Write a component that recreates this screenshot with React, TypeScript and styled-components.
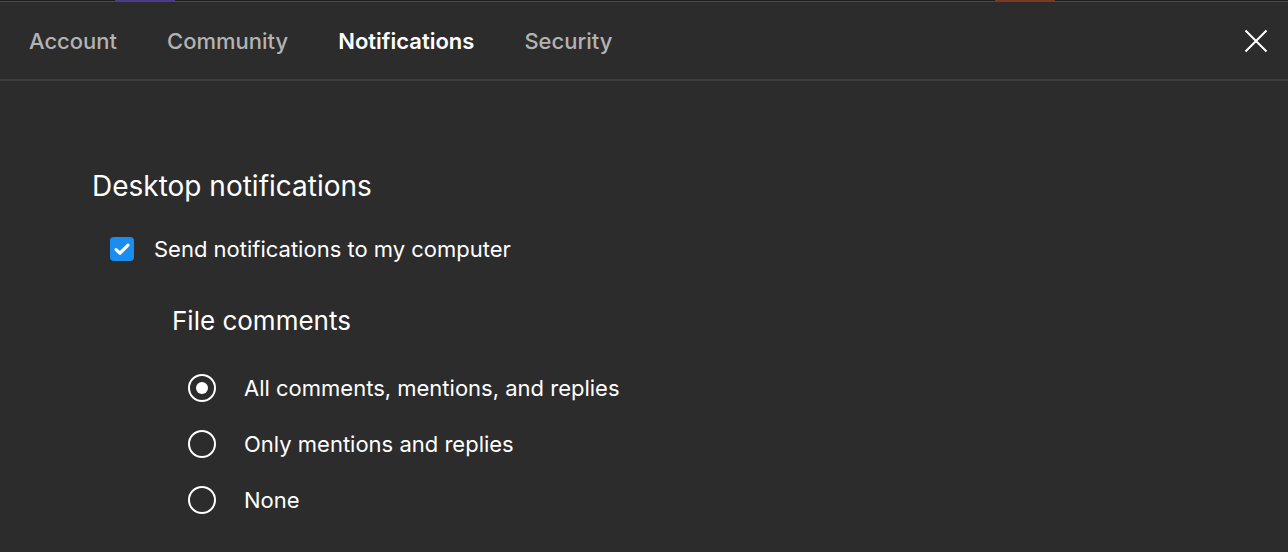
import React, { useState } from 'react'
import styled, { createGlobalStyle } from 'styled-components'

const GlobalStyle = createGlobalStyle`
  html, body {
    margin: 0;
    padding: 0;
    background: #2c2c2c;
  }
  body {
    font-family: Inter, "Noto Sans", sans-serif;
    -webkit-font-smoothing: antialiased;
  }
`

const Page = styled.div`
  width: 1288px;
  height: 552px;
  background: #2c2c2c;
  display: flex;
  flex-direction: column;
  overflow: hidden;
`

// bit of the window behind the modal peeking out at the very top
const BehindStrip = styled.div`
  height: 1px;
  background: #1e1e1e;
  display: flex;
`

const Peek = styled.span<{ $left: number; $width: number; $color: string }>`
  margin-left: ${p => p.$left}px;
  width: ${p => p.$width}px;
  background: ${p => p.$color};
`

const TopEdge = styled.div`
  height: 1px;
  background: #4a4a4a;
`

const Header = styled.div`
  height: 77px;
  display: flex;
  align-items: center;
  padding: 0 20px 0 29px;
  border-bottom: 2px solid #3e3e3e;
`

const Tabs = styled.div`
  display: flex;
  gap: 50px;
  flex: 1;
`

const Tab = styled.button<{ $active?: boolean }>`
  background: none;
  border: none;
  padding: 0;
  font-family: Inter, "Noto Sans", sans-serif;
  font-size: 22px;
  line-height: 26px;
  font-weight: ${p => (p.$active ? 600 : 500)};
  color: ${p => (p.$active ? '#ffffff' : '#b3b3b3')};
  cursor: pointer;
`

const CloseButton = styled.button`
  background: none;
  border: none;
  padding: 0;
  width: 24px;
  height: 24px;
  display: flex;
  align-items: center;
  justify-content: center;
  cursor: pointer;
`

const Body = styled.div`
  padding: 88px 0 0 92px;
  display: flex;
  flex-direction: column;
`

const SectionTitle = styled.h2`
  margin: 0;
  font-size: 28px;
  line-height: 34px;
  font-weight: 400;
  color: #ffffff;
`

const CheckRow = styled.label`
  margin: 33px 0 0 18px;
  display: flex;
  align-items: center;
  gap: 20px;
  cursor: pointer;
`

const CheckBox = styled.span<{ $checked: boolean }>`
  width: 24px;
  height: 24px;
  border-radius: 4px;
  background: ${p => (p.$checked ? '#1a8df0' : 'transparent')};
  border: ${p => (p.$checked ? 'none' : '2px solid #fff')};
  box-sizing: border-box;
  display: flex;
  align-items: center;
  justify-content: center;
`

const Label = styled.span`
  font-size: 22px;
  line-height: 26px;
  color: #ffffff;
`

const SubSection = styled.div`
  margin: 43px 0 0 80px;
  display: flex;
  flex-direction: column;
`

const SubTitle = styled.h3`
  margin: 0;
  font-size: 26px;
  line-height: 32px;
  font-weight: 400;
  color: #ffffff;
`

const RadioList = styled.div`
  margin: 37px 0 0 16px;
  display: flex;
  flex-direction: column;
  gap: 28px;
`

const RadioRow = styled.label`
  display: flex;
  align-items: center;
  gap: 28px;
  height: 28px;
  cursor: pointer;
`

const RadioCircle = styled.span<{ $on: boolean }>`
  width: 28px;
  height: 28px;
  box-sizing: border-box;
  border: 2px solid #ffffff;
  border-radius: 50%;
  display: flex;
  align-items: center;
  justify-content: center;

  &::after {
    content: '';
    width: 12px;
    height: 12px;
    border-radius: 50%;
    background: #ffffff;
    display: ${p => (p.$on ? 'block' : 'none')};
  }
`

const tabs = ['Account', 'Community', 'Notifications', 'Security']
const options = ['All comments, mentions, and replies', 'Only mentions and replies', 'None']

export default function App() {
  const [active, setActive] = useState('Notifications')
  const [desktop, setDesktop] = useState(true)
  const [choice, setChoice] = useState(0)

  return (
    <>
      <GlobalStyle />
      <Page>
        <BehindStrip>
          <Peek $left={115} $width={60} $color="#4b3a86" />
          <Peek $left={820} $width={60} $color="#7a3a22" />
        </BehindStrip>
        <TopEdge />
        <Header>
          <Tabs>
            {tabs.map(t => (
              <Tab key={t} $active={t === active} onClick={() => setActive(t)}>
                {t}
              </Tab>
            ))}
          </Tabs>
          <CloseButton aria-label="Close">
            <svg width="24" height="24" viewBox="0 0 24 24">
              <path d="M1.5 1.5 L22.5 22.5 M22.5 1.5 L1.5 22.5" stroke="#fff" strokeWidth="2" />
            </svg>
          </CloseButton>
        </Header>
        <Body>
          <SectionTitle>Desktop notifications</SectionTitle>
          <CheckRow onClick={() => setDesktop(!desktop)}>
            <CheckBox $checked={desktop}>
              {desktop && (
                <svg width="24" height="24" viewBox="0 0 24 24">
                  <path d="M6 12.6 L10 16.2 L18 8.2" stroke="#fff" strokeWidth="3.2" fill="none" strokeLinecap="round" strokeLinejoin="round" />
                </svg>
              )}
            </CheckBox>
            <Label>Send notifications to my computer</Label>
          </CheckRow>
          <SubSection>
            <SubTitle>File comments</SubTitle>
            <RadioList>
              {options.map((o, i) => (
                <RadioRow key={o} onClick={() => setChoice(i)}>
                  <RadioCircle $on={choice === i} />
                  <Label>{o}</Label>
                </RadioRow>
              ))}
            </RadioList>
          </SubSection>
        </Body>
      </Page>
    </>
  )
}
